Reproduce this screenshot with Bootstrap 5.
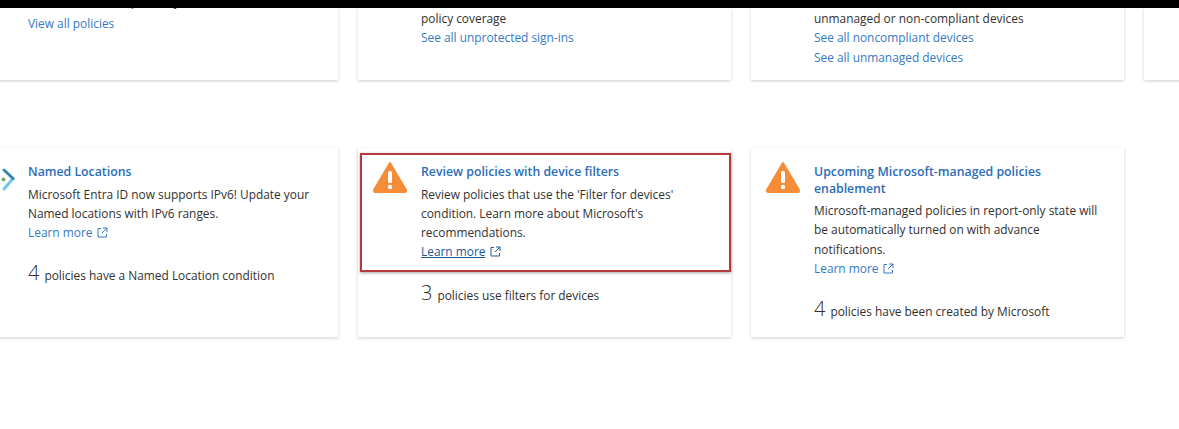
<!DOCTYPE html>
<html lang="en">
<head>
    <meta charset="UTF-8">
    <meta name="viewport" content="width=device-width, initial-scale=1.0">
    <title>Conditional Access overview</title>
    <link href="https://cdn.jsdelivr.net/npm/bootstrap@5.3.0/dist/css/bootstrap.min.css" rel="stylesheet">
    <style>
        html, body { height: 429px; overflow: hidden; background: #fff; }
        body { font-family: "Open Sans", "Liberation Sans", sans-serif; font-size: 11.9px; line-height: 19.3px; color: #323130; }
        a { color: #3579c2; text-decoration: none; }
        .top-bar { height: 8px; background: #000; }
        .card-strip { display: flex; gap: 20px; margin-left: -35px; width: 1600px; }
        .strip-top { height: 72px; }
        .strip-bottom { margin-top: 68px; height: 189px; }
        .tile { width: 373px; flex: none; background: #fff; box-shadow: 0 1px 3px rgba(0,0,0,.2); position: relative; }
        .tile-top { padding-left: 63px; overflow: hidden; }
        .top-text { padding-top: 1px; }
        .clipped-line { margin-top: -17px; margin-bottom: 3px; }
        .tile-body { padding: 16px 16px 0 63px; }
        .tile-title { font-size: 12.3px; font-weight: 600; line-height: 16.5px; color: #2b6cb8; margin-bottom: 4px; }
        .tile-stat { display: flex; align-items: baseline; gap: 5px; margin-top: 21px; }
        .stat-num { font-size: 20px; font-weight: 300; }
        .warn-icon { position: absolute; left: 14px; top: 13px; width: 36px; height: 32px; }
        .loc-icon { position: absolute; left: 35px; top: 20px; width: 16px; height: 24px; }
        .focus-box { position: absolute; left: 2px; top: 5px; width: 371px; height: 119px; border: 2px solid #b8393b; box-shadow: 0 1px 3px rgba(0,0,0,.35); pointer-events: none; }
        .ext-icon { width: 11px; height: 11px; margin-left: 5px; vertical-align: -1px; }
        .link-active { color: #1f5a94; text-decoration: underline; }
    </style>
</head>
<body>
    <div class="top-bar"></div>

    <div class="card-strip strip-top">
        <div class="tile tile-top"><div class="top-text"><div class="clipped-line">Review the rule to protect your</div><a href="#">View all policies</a></div></div>
        <div class="tile tile-top"><div class="top-text"><div>policy coverage</div><a href="#">See all unprotected sign-ins</a></div></div>
        <div class="tile tile-top"><div class="top-text"><div>unmanaged or non-compliant devices</div><a class="d-block" href="#">See all noncompliant devices</a><a class="d-block" href="#">See all unmanaged devices</a></div></div>
        <div class="tile tile-top"></div>
    </div>

    <div class="card-strip strip-bottom">
        <div class="tile tile-body">
            <svg class="loc-icon" viewBox="0 0 16 24"><path d="M13 10.500L4 21" fill="none" stroke="#6cc8e8" stroke-width="3" stroke-linecap="round"/><path d="M4 2L13 10.500" fill="none" stroke="#3b82ad" stroke-width="3" stroke-linecap="round"/><circle cx="3.500" cy="11.500" r="2" fill="#7fb069"/></svg>
            <div class="tile-title">Named Locations</div>
            <div>Microsoft Entra ID now supports IPv6! Update your Named locations with IPv6 ranges.</div>
            <a href="#">Learn more<svg class="ext-icon" viewBox="0 0 11 11"><path d="M4 1.500H1v8.500h8.500V7M6 1h4v4M10 1L5 6" fill="none" stroke="currentColor"/></svg></a>
            <div class="tile-stat"><span class="stat-num">4</span><span>policies have a Named Location condition</span></div>
        </div>
        <div class="tile tile-body">
            <svg class="warn-icon" viewBox="0 0 36 32"><path d="M18 2L34 29a1.500 1.500 0 0 1-1 2H3a1.500 1.500 0 0 1-1-2z" fill="#f58c38" stroke="#f58c38" stroke-linejoin="round" stroke-width="2"/><rect x="16" y="10" width="4" height="12" rx="1.500" fill="#fff"/><circle cx="18" cy="26" r="2.200" fill="#fff"/></svg>
            <div class="tile-title">Review policies with device filters</div>
            <div>Review policies that use the 'Filter for devices' condition. Learn more about Microsoft's recommendations.</div>
            <a class="link-active" href="#">Learn more<svg class="ext-icon" viewBox="0 0 11 11"><path d="M4 1.500H1v8.500h8.500V7M6 1h4v4M10 1L5 6" fill="none" stroke="currentColor"/></svg></a>
            <div class="tile-stat"><span class="stat-num">3</span><span>policies use filters for devices</span></div>
            <div class="focus-box"></div>
        </div>
        <div class="tile tile-body">
            <svg class="warn-icon" viewBox="0 0 36 32"><path d="M18 2L34 29a1.500 1.500 0 0 1-1 2H3a1.500 1.500 0 0 1-1-2z" fill="#f58c38" stroke="#f58c38" stroke-linejoin="round" stroke-width="2"/><rect x="16" y="10" width="4" height="12" rx="1.500" fill="#fff"/><circle cx="18" cy="26" r="2.200" fill="#fff"/></svg>
            <div class="tile-title">Upcoming Microsoft-managed policies enablement</div>
            <div>Microsoft-managed policies in report-only state will be automatically turned on with advance notifications.</div>
            <a href="#">Learn more<svg class="ext-icon" viewBox="0 0 11 11"><path d="M4 1.500H1v8.500h8.500V7M6 1h4v4M10 1L5 6" fill="none" stroke="currentColor"/></svg></a>
            <div class="tile-stat"><span class="stat-num">4</span><span>policies have been created by Microsoft</span></div>
        </div>
    </div>

    <script src="https://cdn.jsdelivr.net/npm/bootstrap@5.3.0/dist/js/bootstrap.bundle.min.js"></script>
</body>
</html>
